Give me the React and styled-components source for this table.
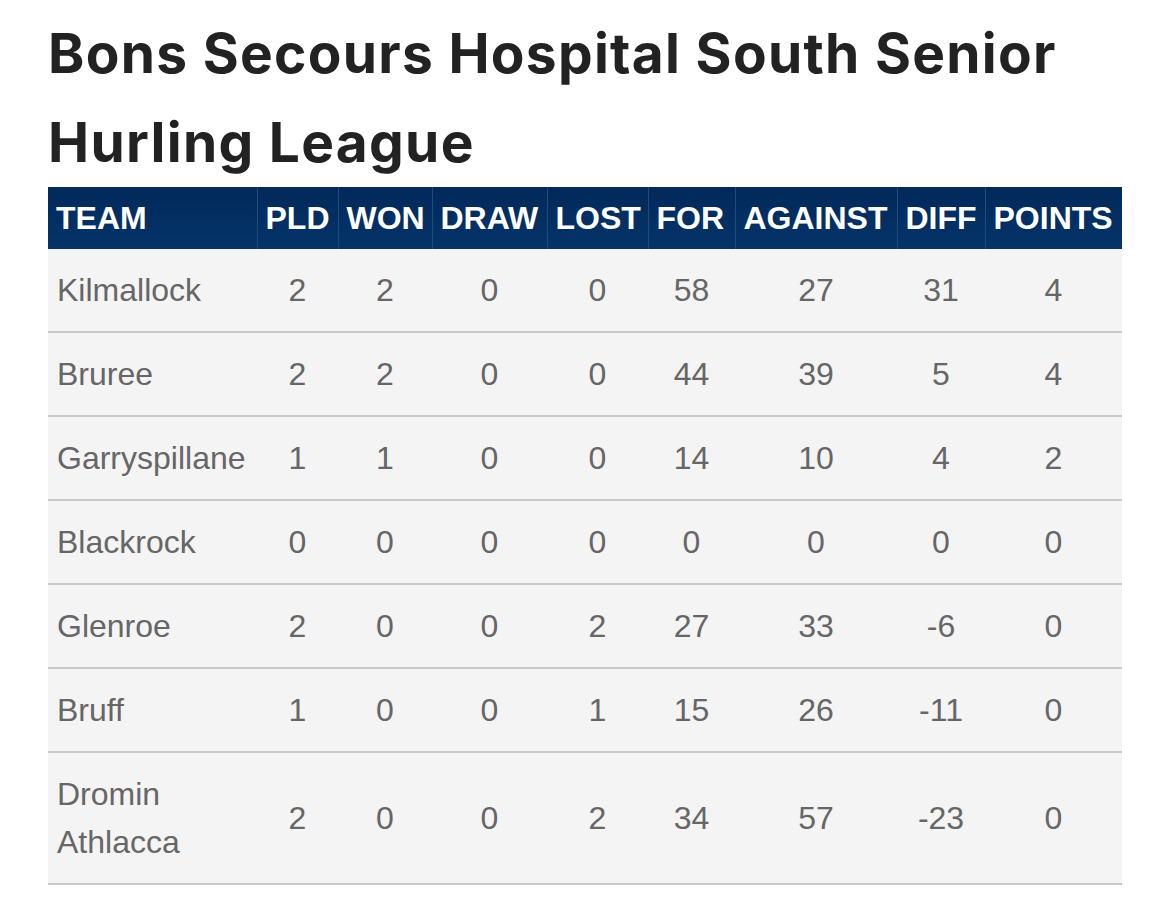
import React from 'react'
import styled, { createGlobalStyle } from 'styled-components'

const GlobalStyle = createGlobalStyle`
body{
    margin: 0;
    background: #ffffff;
}
`

const columns = [
    { label: 'TEAM', width: 209 },
    { label: 'PLD', width: 81 },
    { label: 'WON', width: 94 },
    { label: 'DRAW', width: 115 },
    { label: 'LOST', width: 101 },
    { label: 'FOR', width: 87 },
    { label: 'AGAINST', width: 162 },
    { label: 'DIFF', width: 88 },
    { label: 'POINTS', width: 137 },
]

const rows = [
    ['Kilmallock', 2, 2, 0, 0, 58, 27, 31, 4],
    ['Bruree', 2, 2, 0, 0, 44, 39, 5, 4],
    ['Garryspillane', 1, 1, 0, 0, 14, 10, 4, 2],
    ['Blackrock', 0, 0, 0, 0, 0, 0, 0, 0],
    ['Glenroe', 2, 0, 0, 2, 27, 33, -6, 0],
    ['Bruff', 1, 0, 0, 1, 15, 26, -11, 0],
    ['Dromin Athlacca', 2, 0, 0, 2, 34, 57, -23, 0],
]

function App() {
    return (
        <Page>
            <GlobalStyle />
            <Title>Bons Secours Hospital South Senior Hurling League</Title>
            <Table>
                <colgroup>
                    {columns.map(c => <col key={c.label} width={c.width} />)}
                </colgroup>
                <thead>
                    <tr>
                        {columns.map(c => <Th key={c.label}>{c.label}</Th>)}
                    </tr>
                </thead>
                <tbody>
                    {rows.map(r => (
                        <tr key={r[0]}>
                            {r.map((v, i) => (
                                <Td key={i} team={i === 0}>{v}</Td>
                            ))}
                        </tr>
                    ))}
                </tbody>
            </Table>
        </Page>
    )
}

export default App

const Page = styled.div`
padding: 9px 48px 28px;
`
const Title = styled.h1`
margin: 0;
width: 1074px;
font-family: Inter, "Liberation Sans", sans-serif;
font-weight: 700;
font-size: 55px;
line-height: 89px;
letter-spacing: 1.3px;
color: #222222;
`
const Table = styled.table`
width: 1074px;
table-layout: fixed;
border-collapse: collapse;
font-family: "Liberation Sans", Arial, sans-serif;
`
const Th = styled.th`
background: linear-gradient(#01295a, #053469);
color: #ffffff;
font-size: 32px;
font-weight: 700;
line-height: 48px;
text-align: left;
padding: 7px 8px;
white-space: nowrap;
& + &{
    border-left: 1px solid #234a7c;
}
`
const Td = styled.td`
background: #f4f4f4;
color: #666666;
font-size: 32px;
line-height: 48px;
padding: 17px ${props => props.team ? '9px' : '8px'};
text-align: ${props => props.team ? 'left' : 'center'};
border-bottom: 2px solid #c9c9c9;
`
